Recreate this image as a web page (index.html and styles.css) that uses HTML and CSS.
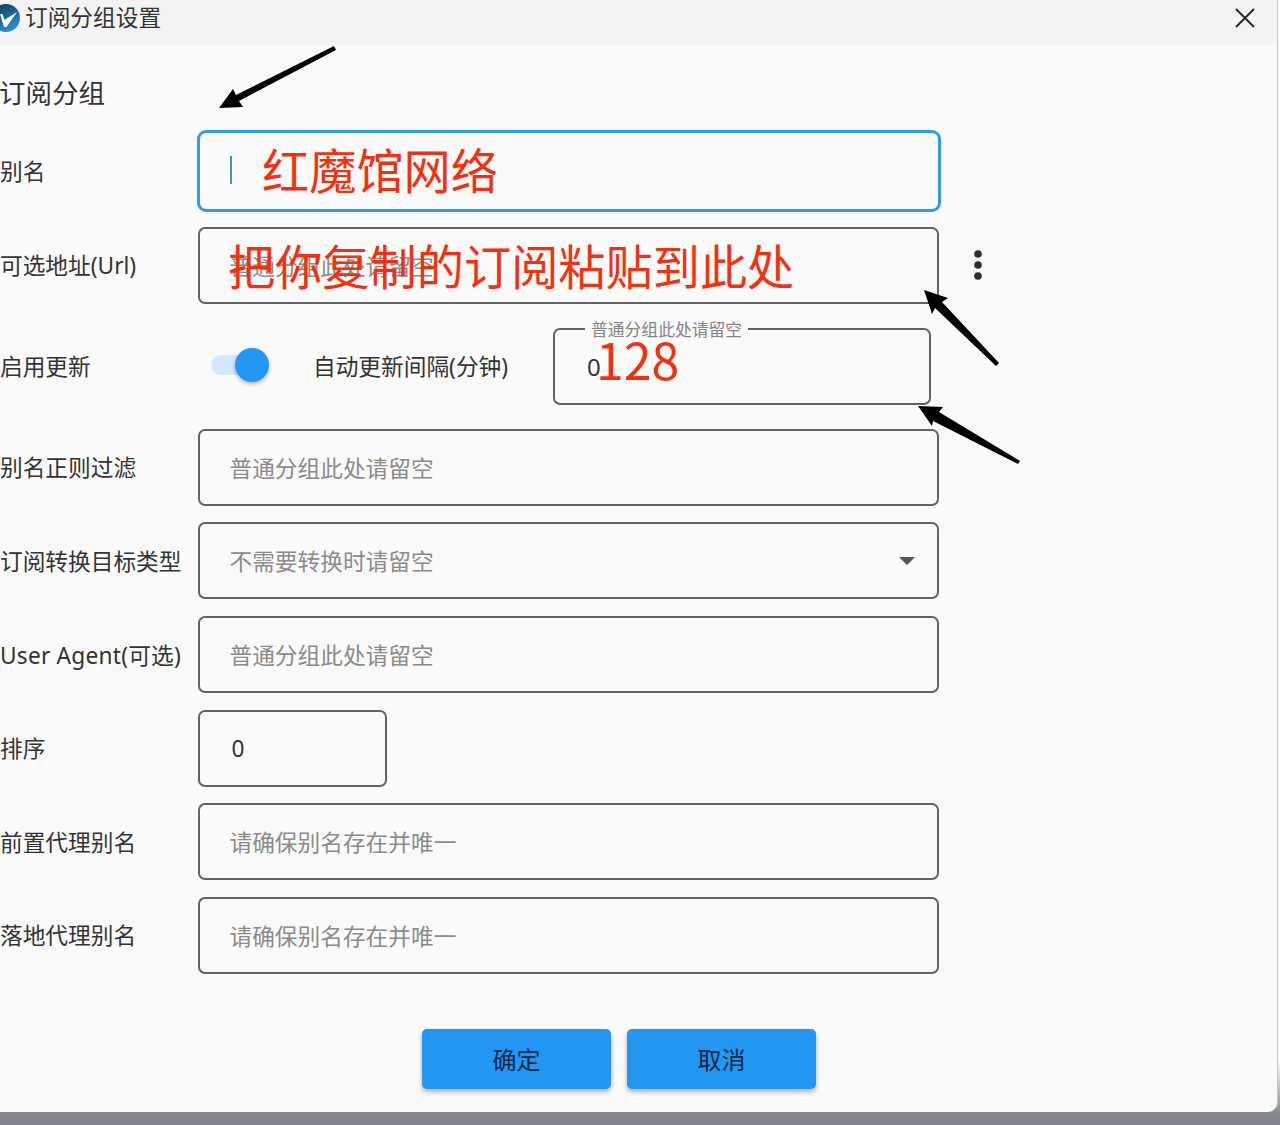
FILE: index.html
```html
<!DOCTYPE html>
<html lang="zh-CN">
<head>
<meta charset="utf-8">
<title>订阅分组设置</title>
<link rel="stylesheet" href="styles.css">
</head>
<body>
<div class="dialog">
  <header class="titlebar">
    <svg class="logo" viewBox="0 0 28 28" aria-hidden="true">
      <defs>
        <linearGradient id="logoFill" x1="0.2" y1="0" x2="0.7" y2="1">
          <stop offset="0" stop-color="#133a58"/>
          <stop offset="1" stop-color="#2a97d6"/>
        </linearGradient>
      </defs>
      <circle cx="14" cy="14" r="14" fill="url(#logoFill)"/>
      <path d="M8 10 L10.5 10 L12.5 16 L25 8 L14.5 23 L12 23 Z" fill="#fff"/>
    </svg>
    <span class="title">订阅分组设置</span>
    <svg class="close" viewBox="0 0 20 20" aria-hidden="true">
      <path d="M1 1 L19 19 M19 1 L1 19" fill="none" stroke="#2b2b2b" stroke-width="2"/>
    </svg>
  </header>

  <h2 class="heading">订阅分组</h2>

  <div class="rows">
    <div class="row row--alias">
      <div class="label label--alias">别名</div>
      <div class="field field--focus">
        <i class="caret"></i>
        <span class="note note--alias">红魔馆网络</span>
      </div>
    </div>

    <div class="row">
      <div class="label">可选地址(Url)</div>
      <div class="field">
        <span class="placeholder">普通分组此处请留空</span>
        <span class="note note--url">把你复制的订阅粘贴到此处</span>
      </div>
      <svg class="more" viewBox="0 0 10 32" aria-hidden="true">
        <circle cx="5" cy="5" r="3.8"/>
        <circle cx="5" cy="16" r="3.8"/>
        <circle cx="5" cy="27" r="3.8"/>
      </svg>
    </div>

    <div class="row row--switch">
      <div class="label">启用更新</div>
      <div class="switch"><i class="switch-track"></i><i class="switch-thumb"></i></div>
      <div class="switch-label">自动更新间隔(分钟)</div>
      <div class="field field--interval">
        <span class="legend">普通分组此处请留空</span>
        <span class="value value--small">0</span>
        <span class="note note--num">128</span>
      </div>
    </div>

    <div class="row">
      <div class="label">别名正则过滤</div>
      <div class="field"><span class="placeholder">普通分组此处请留空</span></div>
    </div>

    <div class="row">
      <div class="label">订阅转换目标类型</div>
      <div class="field field--select">
        <span class="placeholder">不需要转换时请留空</span>
        <i class="select-arrow"></i>
      </div>
    </div>

    <div class="row">
      <div class="label label--latin">User Agent(可选)</div>
      <div class="field"><span class="placeholder">普通分组此处请留空</span></div>
    </div>

    <div class="row">
      <div class="label">排序</div>
      <div class="field field--short"><span class="value">0</span></div>
    </div>

    <div class="row">
      <div class="label">前置代理别名</div>
      <div class="field"><span class="placeholder">请确保别名存在并唯一</span></div>
    </div>

    <div class="row">
      <div class="label">落地代理别名</div>
      <div class="field"><span class="placeholder">请确保别名存在并唯一</span></div>
    </div>
  </div>

  <div class="actions">
    <button class="btn" type="button">确定</button>
    <button class="btn" type="button">取消</button>
  </div>
</div>

<svg class="arrows" viewBox="0 0 1280 1125" aria-hidden="true">
  <polygon points="219,108 233,89 236,95 334,46 336,50 239,101 243,107"/>
  <polygon points="924,290 948,298 942,302 999,363 996,366 935,308 932,314"/>
  <polygon points="918,406 943,407 939,412 1020,461 1018,464 933,421 932,426"/>
</svg>
</body>
</html>
```

FILE: styles.css
```css
* {
  box-sizing: border-box;
}

html,
body {
  margin: 0;
  padding: 0;
}

body {
  position: relative;
  width: 1280px;
  height: 1125px;
  overflow: hidden;
  background: linear-gradient(to bottom, #fdfdfd 0, #fdfdfd 1060px, #8a8c94 1112px, #7d8087 1125px);
  font-family: "Noto Sans", "Noto Sans CJK SC", sans-serif;
  font-size: 22.7px;
  color: #333;
}

.dialog {
  width: 1278px;
  height: 1112px;
  background: #fafafa;
  border-right: 1px solid #c4c4c4;
  border-bottom-right-radius: 10px;
}

.titlebar {
  display: flex;
  align-items: center;
  height: 45px;
  padding-right: 22px;
  padding-bottom: 9px;
  background: #f3f3f3;
}

.logo {
  flex: none;
  width: 28px;
  height: 28px;
  margin-left: -8px;
}

.title {
  flex: 1;
  margin-left: 5px;
  line-height: 36px;
}

.close {
  flex: none;
  width: 20px;
  height: 20px;
}

.heading {
  margin: 0 0 0 -1px;
  height: 85px;
  padding-top: 29px;
  font-size: 26.5px;
  font-weight: 400;
  line-height: 38px;
}

.rows {
  display: flex;
  flex-direction: column;
  gap: 16.6px;
}

.row {
  display: flex;
  align-items: center;
  height: 77px;
}

.row--alias {
  height: 82px;
  margin-bottom: -2.1px;
}

.row--switch {
  margin: 7.6px 0;
}

.label {
  flex: none;
  width: 198px;
  padding-bottom: 1px;
  white-space: nowrap;
}

.label--alias {
  width: 196.5px;
}

.label--latin {
  letter-spacing: 0.22px;
}

.field {
  position: relative;
  display: flex;
  align-items: center;
  flex: none;
  width: 740.5px;
  height: 100%;
  padding-left: 29.5px;
  background: transparent;
  border: 2px solid #636363;
  border-radius: 7px;
}

.field--focus {
  width: 744px;
  border: 3.5px solid #2f9bf4;
  border-radius: 9px;
}

.field--interval {
  width: 377.5px;
}

.field--short {
  width: 188.5px;
}

.placeholder {
  color: #8b8b8b;
  white-space: nowrap;
}

.value {
  margin-left: 2px;
  color: #333;
}

.value--small {
  position: absolute;
  left: 30px;
  top: 21px;
  font-size: 24px;
  line-height: 32px;
}

.legend {
  position: absolute;
  left: 30px;
  top: -10px;
  padding: 0 6px;
  background: #fafafa;
  color: #858585;
  font-size: 16.8px;
  line-height: 20px;
  white-space: nowrap;
}

.caret {
  position: absolute;
  left: 30px;
  top: 23px;
  width: 2px;
  height: 28px;
  background: #4a90c8;
}

.note {
  position: absolute;
  color: #f5300f;
  font-family: "Noto Sans CJK SC", sans-serif;
  font-size: 47.2px;
  line-height: 60px;
  white-space: nowrap;
}

.note--alias {
  left: 62.5px;
  top: 6px;
}

.note--url {
  left: 28px;
  top: 6px;
}

.note--num {
  left: 41px;
  top: -2px;
  font-size: 50px;
}

.more {
  flex: none;
  width: 10px;
  height: 32px;
  margin-left: 34.5px;
  fill: #2e2e2e;
}

.switch {
  position: relative;
  flex: none;
  width: 58px;
  height: 34px;
  margin-left: 13px;
  margin-bottom: 3px;
}

.switch-track {
  position: absolute;
  left: 0;
  top: 7px;
  width: 48px;
  height: 20px;
  background: #d3e9fc;
  border-radius: 10px;
}

.switch-thumb {
  position: absolute;
  left: 24px;
  top: 0;
  width: 34px;
  height: 34px;
  background: #2196f3;
  border-radius: 50%;
  box-shadow: 0 2px 4px rgba(0, 0, 0, 0.3);
}

.switch-label {
  flex: none;
  width: 240px;
  margin-left: 44px;
  padding-bottom: 1px;
  white-space: nowrap;
}

.select-arrow {
  position: absolute;
  right: 22px;
  top: 33px;
  width: 0;
  height: 0;
  border-left: 8px solid transparent;
  border-right: 8px solid transparent;
  border-top: 8px solid #555;
}

.actions {
  display: flex;
  gap: 16px;
  margin-top: 55px;
  padding-left: 422px;
}

.btn {
  width: 189px;
  height: 60px;
  padding: 0;
  background: #2196f3;
  border: 0;
  border-radius: 5px;
  box-shadow: 0 3px 5px rgba(0, 0, 0, 0.3);
  color: #0a2748;
  font-family: inherit;
  font-size: 24px;
}

.arrows {
  position: absolute;
  left: 0;
  top: 0;
  width: 1280px;
  height: 1125px;
  fill: #000;
  pointer-events: none;
}
```
